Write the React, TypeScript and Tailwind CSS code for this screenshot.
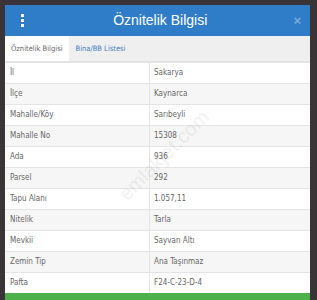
const rows: [string, string][] = [
  ['İl', 'Sakarya'],
  ['İlçe', 'Kaynarca'],
  ['Mahalle/Köy', 'Sarıbeyli'],
  ['Mahalle No', '15308'],
  ['Ada', '936'],
  ['Parsel', '292'],
  ['Tapu Alanı', '1.057,11'],
  ['Nitelik', 'Tarla'],
  ['Mevkii', 'Sayvan Altı'],
  ['Zemin Tip', 'Ana Taşınmaz'],
  ['Pafta', 'F24-C-23-D-4'],
];

export default function App() {
  return (
    <div className="w-[317px] h-[300px] overflow-hidden bg-[#3a3436] pt-[5px] px-[5px] font-['Liberation_Sans',Arial,sans-serif]">
      <div className="relative w-[305px] bg-white">
        {/* Header */}
        <div className="flex items-center h-[31px] bg-[#2f7dc8] pl-3 pr-[9px]">
          <div className="flex flex-col gap-[2px] w-[10px] items-center">
            <span className="w-[3px] h-[3px] bg-white" />
            <span className="w-[3px] h-[3px] bg-white" />
            <span className="w-[3px] h-[3px] bg-white" />
          </div>
          <div className="flex-1 text-center text-white text-[14px]">Öznitelik Bilgisi</div>
          <div className="text-[#7fa9d6] text-[13px] leading-none font-bold">×</div>
        </div>

        {/* Tabs */}
        <div className="flex h-[26px] bg-[#efefef] border-b border-[#e3e3e3] font-['DejaVu_Sans_Condensed','Liberation_Sans',sans-serif]">
          <div className="flex items-center px-[6px] bg-white text-[7.5px] text-[#666]">Öznitelik Bilgisi</div>
          <div className="flex items-center px-[7px] text-[7.5px] text-[#3f80c4]">Bina/BB Listesi</div>
        </div>

        {/* Table */}
        <div className="flex flex-col font-['DejaVu_Sans_Condensed','Liberation_Sans',sans-serif]">
          {rows.map(([k, v], i) => (
            <div
              key={k}
              className={`flex h-[21px] border-t border-[#e4e4e4] text-[8px] text-[#666] ${i % 2 === 1 ? 'bg-[#f6f6f6]' : 'bg-white'}`}
            >
              <div className="w-[145px] flex items-center pl-[5px] border-r border-[#e4e4e4]">{k}</div>
              <div className="flex-1 flex items-center pl-[4px]">{v}</div>
            </div>
          ))}
        </div>

        <div className="h-[10px] bg-[#4db04a]" />

        {/* watermark */}
        <div className="absolute left-[100px] top-[135px] -rotate-[45deg] text-[20px] text-[#000] opacity-[0.05] pointer-events-none">
          emlakjet.com
        </div>
      </div>
    </div>
  );
}
